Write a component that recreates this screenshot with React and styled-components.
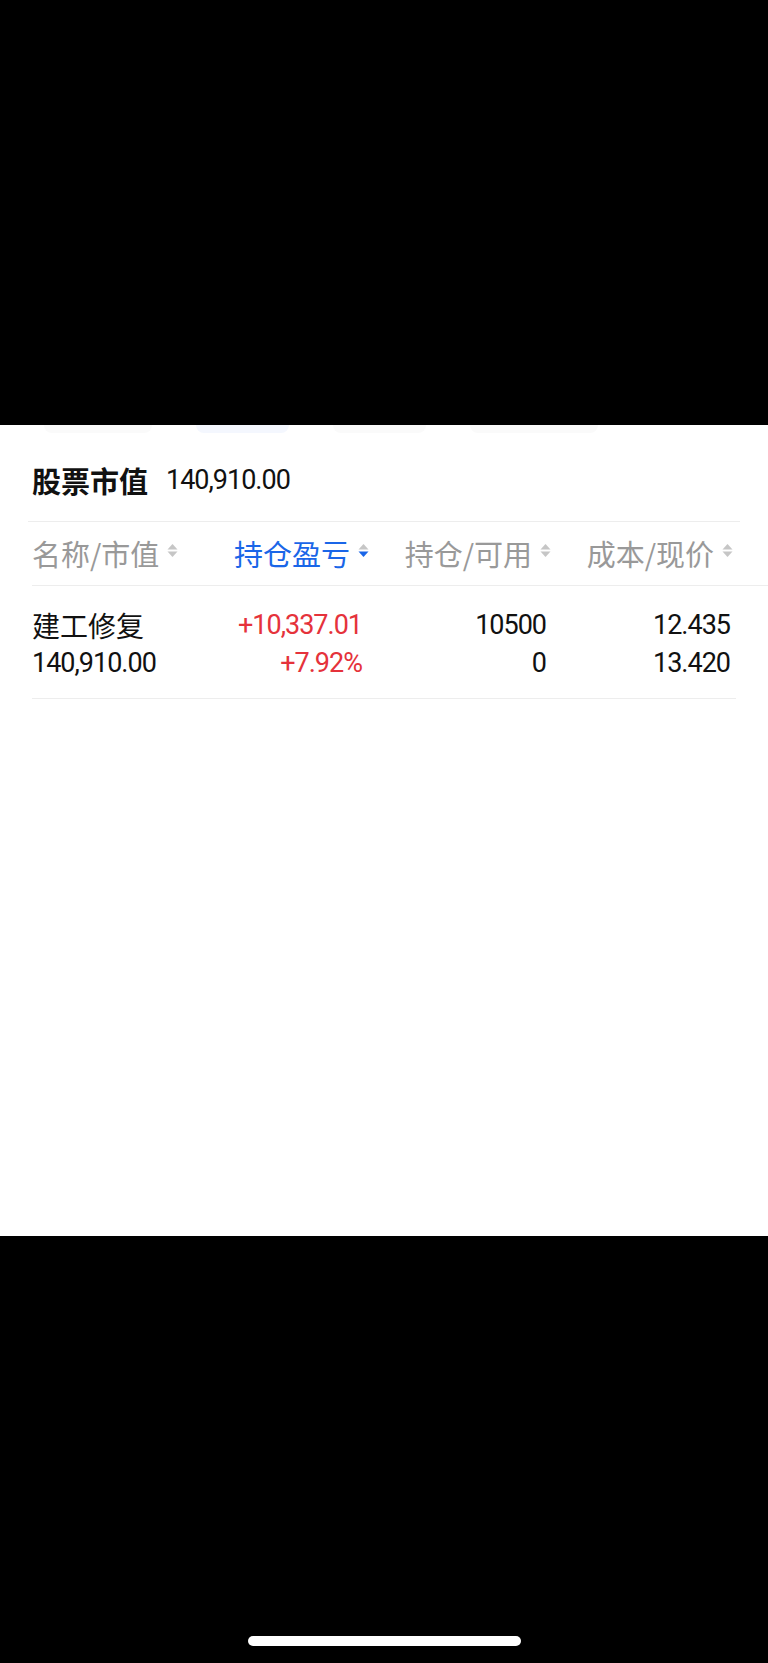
import React from "react";
import styled, { createGlobalStyle } from "styled-components";

const Global = createGlobalStyle`
  html, body { margin: 0; padding: 0; background: #000; }
  body { font-family: Roboto, "Noto Sans CJK SC", sans-serif; }
`;

const CJK = `"Noto Sans CJK SC", "Noto Sans", sans-serif`;
const NUM = `Roboto, "Noto Sans CJK SC", sans-serif`;

const Screen = styled.div`
  width: 768px;
  height: 1663px;
  display: flex;
  flex-direction: column;
  background: #000;
`;

const TopArea = styled.div`
  height: 425px;
  flex: none;
  background: #000;
`;

const Panel = styled.div`
  height: 811px;
  flex: none;
  background: #fff;
  display: flex;
  flex-direction: column;
  overflow: hidden;
`;

const TabStrip = styled.div`
  height: 12px;
  display: flex;
  align-items: flex-start;
  padding-left: 44px;
`;

const TabPill = styled.div`
  width: ${(p) => p.$w}px;
  margin-right: ${(p) => p.$gap}px;
  height: 8px;
  border-radius: 0 0 40px 40px;
  background: ${(p) => (p.$active ? "#f4f7fe" : "#fafafa")};
`;

const TitleRow = styled.div`
  margin: 0 28px;
  padding: 26px 4px 24px;
  display: flex;
  align-items: center;
  gap: 18px;
  line-height: 34px;
  border-bottom: 1px solid #ededed;
  width: 712px;
  box-sizing: border-box;
`;

const TitleLabel = styled.span`
  font-family: ${CJK};
  font-weight: 700;
  font-size: 29px;
  color: #111;
`;

const TitleValue = styled.span`
  font-family: ${NUM};
  font-size: 27px;
  letter-spacing: -1px;
  color: #111;
`;

const Grid = styled.div`
  display: grid;
  grid-template-columns: 168px 169px 182px 182px;
  margin-left: 32px;
`;

const HeaderRow = styled(Grid)`
  height: 63px;
  align-items: center;
  border-bottom: 1px solid #ededed;
`;

const HeaderCell = styled.div`
  display: flex;
  align-items: center;
  justify-content: ${(p) => (p.$left ? "flex-start" : "flex-end")};
  gap: 8px;
  font-family: ${CJK};
  font-size: 29px;
  color: ${(p) => (p.$active ? "#1a66e8" : "#999")};
  line-height: 63px;
  white-space: nowrap;
`;

const DataRow = styled(Grid)`
  padding: 20px 0 16px;
  width: 704px;
  border-bottom: 1px solid #ededed;
`;

const DataCell = styled.div`
  display: flex;
  flex-direction: column;
  align-items: ${(p) => (p.$left ? "flex-start" : "flex-end")};
  padding-right: ${(p) => (p.$left ? 0 : p.$pr)}px;
`;

const Line = styled.div`
  height: 38px;
  line-height: 38px;
  font-family: ${(p) => (p.$cjk ? CJK : NUM)};
  font-size: ${(p) => (p.$cjk ? 28 : 27)}px;
  letter-spacing: ${(p) => (p.$cjk ? 0 : -1)}px;
  color: ${(p) => (p.$red ? "#e5323b" : "#111")};
  white-space: nowrap;
`;

const BottomArea = styled.div`
  flex: 1;
  background: #000;
  display: flex;
  justify-content: center;
  padding-top: 400px;
  box-sizing: border-box;
`;

const HomeIndicator = styled.div`
  width: 273px;
  height: 10px;
  border-radius: 5px;
  background: #fff;
`;

const SortSvg = styled.svg`
  flex: none;
  margin-top: -7px;
`;

function SortIcon({ active }) {
  return (
    <SortSvg width="11" height="13" viewBox="0 0 11 13">
      <polygon points="0.5,5.5 5.5,0 10.5,5.5" fill="#c6c6c6" />
      <polygon points="0.5,7.5 5.5,13 10.5,7.5" fill={active ? "#1a66e8" : "#c6c6c6"} />
    </SortSvg>
  );
}

const headers = [
  { label: "名称/市值", left: true },
  { label: "持仓盈亏", active: true },
  { label: "持仓/可用" },
  { label: "成本/现价" },
];

export default function App() {
  return (
    <>
      <Global />
      <Screen>
        <TopArea />
        <Panel>
          <TabStrip>
            <TabPill $w={108} $gap={44} />
            <TabPill $w={93} $gap={44} $active />
            <TabPill $w={93} $gap={44} />
            <TabPill $w={128} $gap={0} />
          </TabStrip>
          <TitleRow>
            <TitleLabel>股票市值</TitleLabel>
            <TitleValue>140,910.00</TitleValue>
          </TitleRow>
          <HeaderRow>
            {headers.map((h) => (
              <HeaderCell key={h.label} $left={h.left} $active={h.active}>
                {h.label}
                <SortIcon active={h.active} />
              </HeaderCell>
            ))}
          </HeaderRow>
          <DataRow>
            <DataCell $left>
              <Line $cjk>建工修复</Line>
              <Line>140,910.00</Line>
            </DataCell>
            <DataCell $pr={7}>
              <Line $red>+10,337.01</Line>
              <Line $red>+7.92%</Line>
            </DataCell>
            <DataCell $pr={5}>
              <Line>10500</Line>
              <Line>0</Line>
            </DataCell>
            <DataCell $pr={3}>
              <Line>12.435</Line>
              <Line>13.420</Line>
            </DataCell>
          </DataRow>
        </Panel>
        <BottomArea>
          <HomeIndicator />
        </BottomArea>
      </Screen>
    </>
  );
}
